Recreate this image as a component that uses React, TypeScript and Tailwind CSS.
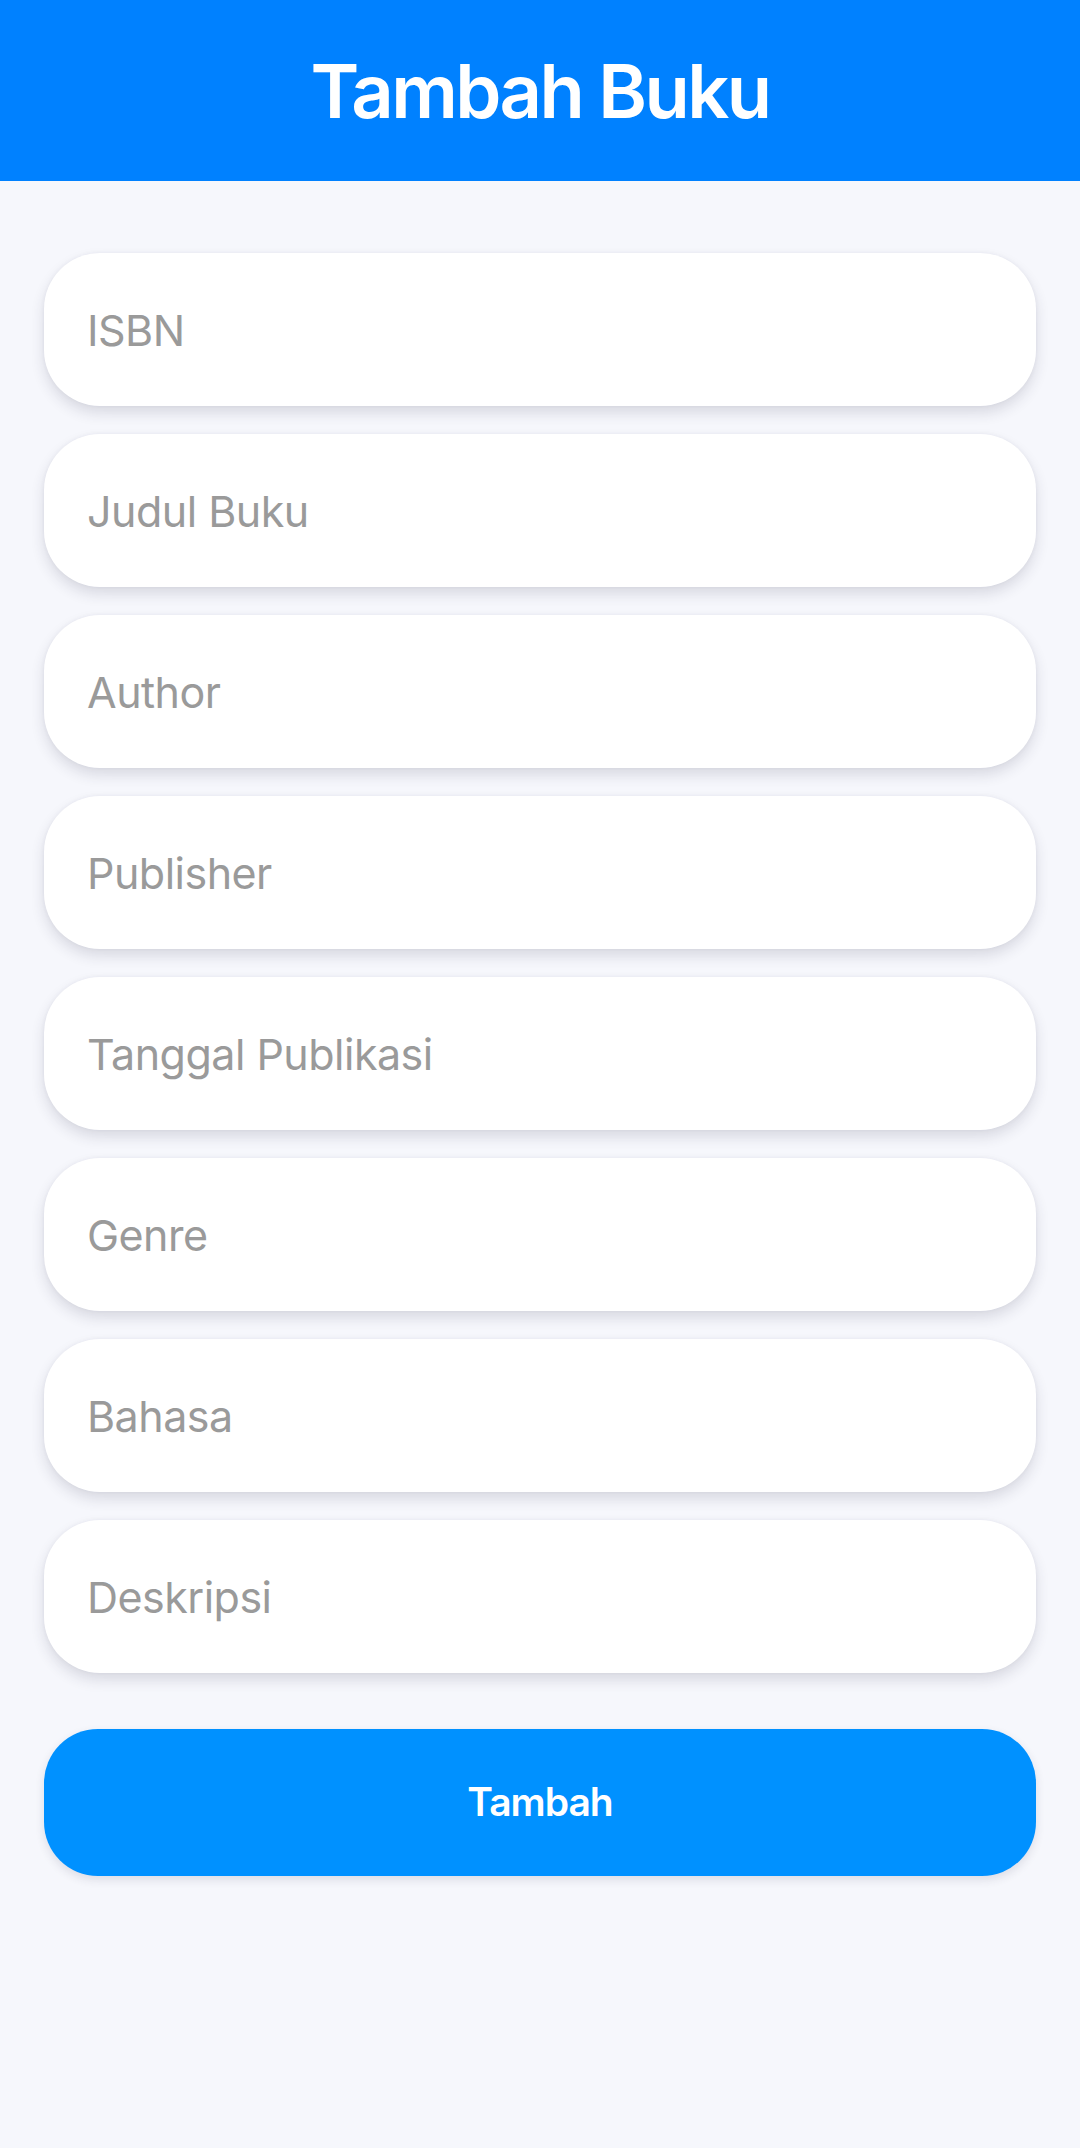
import React from "react";

const fields = [
  "ISBN",
  "Judul Buku",
  "Author",
  "Publisher",
  "Tanggal Publikasi",
  "Genre",
  "Bahasa",
  "Deskripsi",
];

export default function App() {
  return (
    <div className="min-h-[2148px] w-full bg-[#F6F7FC] font-['Inter',sans-serif]">
      <header className="flex h-[181px] items-center justify-center bg-[#0081FF]">
        <h1 className="text-[74px] font-semibold leading-none tracking-[-0.035em] text-white">
          Tambah Buku
        </h1>
      </header>
      <main className="flex flex-col gap-[28px] px-[44px] pt-[72px]">
        {fields.map((f) => (
          <input
            key={f}
            placeholder={f}
            className="h-[153px] w-full rounded-[56px] bg-white pl-[43px] text-[43px] tracking-[-0.012em] text-[#222] outline-none shadow-[0_7px_14px_rgba(40,40,70,0.14),0_0_4px_rgba(40,40,70,0.05)] placeholder:text-[#9A9A9A]"
          />
        ))}
        <button className="mt-[28px] flex h-[147px] w-full items-center justify-center rounded-[54px] bg-[#0091FF] text-[39px] font-semibold tracking-[-0.025em] text-white shadow-[0_4px_10px_rgba(40,40,70,0.12)]">
          Tambah
        </button>
      </main>
    </div>
  );
}
